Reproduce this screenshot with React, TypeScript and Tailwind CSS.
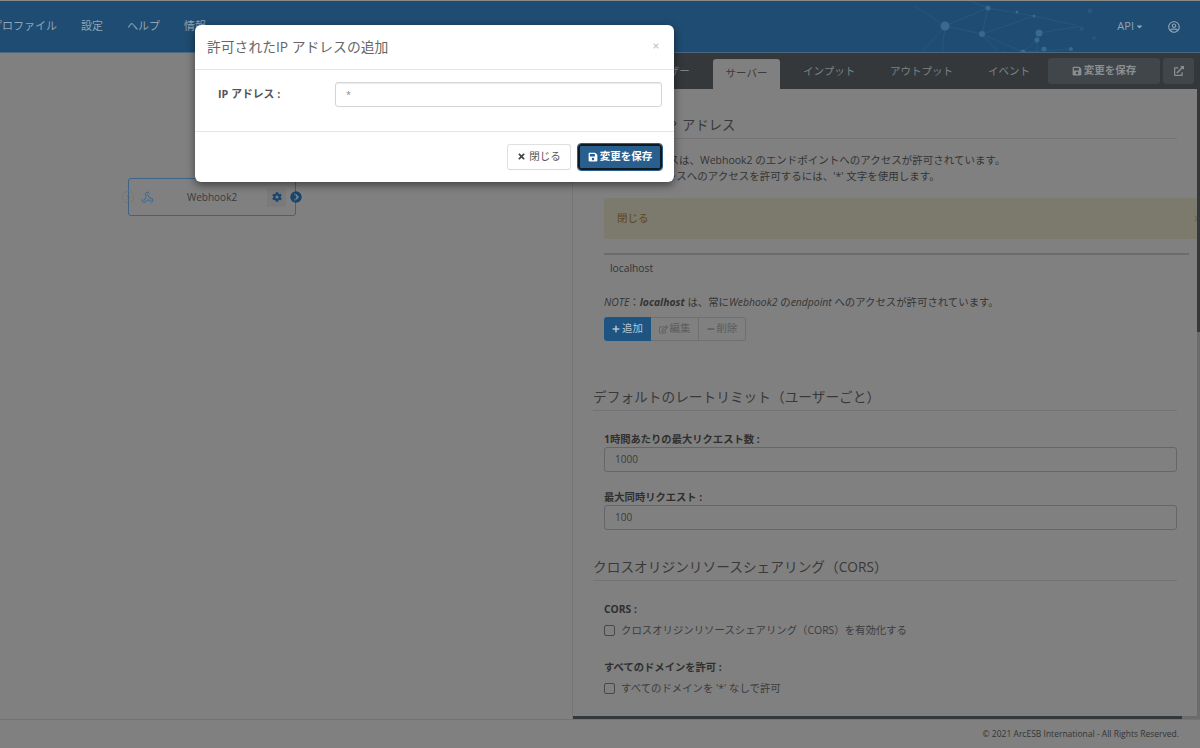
import { FaSave, FaTimes, FaPlus, FaMinus, FaRegEdit, FaExternalLinkAlt, FaRegUserCircle, FaCog, FaChevronCircleRight, FaCaretDown, FaChevronRight } from "react-icons/fa"
import { Webhook } from "lucide-react"

const font = "font-['Open_Sans','Noto_Sans_CJK_JP',sans-serif]"

const navItems = [
  { label: "プロファイル", className: "ml-[-9px]" },
  { label: "設定", className: "ml-[24px]" },
  { label: "ヘルプ", className: "ml-[24px]" },
  { label: "情報", className: "ml-[24px]" },
]

const nodes = [
  [945, 25, 4.5], [988, 7, 2.5], [982, 33, 3], [1017, 11, 1.5], [1034, 15, 1.5], [1039, 32, 3.5],
  [1037, 39, 2.5], [1023, 51, 2.5], [1071, 48, 2], [1044, 48, 2.5], [1082, 28, 2], [1090, 10, 2.5], [1094, 37, 2], [1005, 52, 2],
]

const links = [
  [945, 25, 988, 7], [945, 25, 982, 33], [988, 7, 1034, 15], [988, 7, 982, 33], [982, 33, 1034, 15],
  [982, 33, 1023, 51], [982, 33, 1000, 53], [1023, 51, 1037, 39], [1037, 39, 1039, 32], [1037, 39, 1037, 53],
  [1039, 32, 1082, 25], [1034, 15, 1075, 24], [945, 25, 920, 53], [945, 25, 942, 53], [945, 25, 915, 5], [988, 7, 970, 0],
  [1023, 51, 1071, 48],
]

function HeaderGraphic() {
  return (
    <svg className="absolute left-[900px] top-0 h-[52px] w-[220px]" viewBox="900 0 220 52">
      {links.map((l, i) => (
        <line key={i} x1={l[0]} y1={l[1]} x2={l[2]} y2={l[3]} stroke="#2a5c84" strokeWidth="0.7" />
      ))}
      {nodes.map((n, i) => (
        <circle key={i} cx={n[0]} cy={n[1]} r={n[2]} fill={i > 9 ? "#265780" : "#38698f"} />
      ))}
    </svg>
  )
}

function Header() {
  return (
    <header className="relative flex h-[53px] shrink-0 items-center overflow-hidden border-t border-b border-t-[#8a8a8a] border-b-[#4a6880] bg-[#1f4c72] text-[11px] text-[#93a4b4]">
      <HeaderGraphic />
      <nav className="relative flex items-center">
        {navItems.map((item) => (
          <span key={item.label} className={`whitespace-nowrap ${item.className}`}>{item.label}</span>
        ))}
      </nav>
      <div className="relative ml-auto flex items-center pr-[20px]">
        <span className="flex items-center gap-[1px] text-[11px]">API <FaCaretDown className="h-[9px] w-[9px]" /></span>
        <FaRegUserCircle className="ml-[24px] h-[12px] w-[12px]" />
      </div>
    </header>
  )
}

function Tabs() {
  return (
    <div className="flex h-[36px] shrink-0 items-end whitespace-nowrap bg-[#34383b] text-[10.5px] text-[#7d8286]">
      <span className="mb-[9px] ml-[76px] w-[42px]">ユーザー</span>
      <span className="ml-[23px] flex h-[30px] w-[67px] items-center justify-center rounded-t-[3px] bg-[#808080] text-[#3b3b3b]">サーバー</span>
      <span className="mb-[9px] ml-[23px] w-[52px]">インプット</span>
      <span className="mb-[9px] ml-[35px] w-[63px]">アウトプット</span>
      <span className="mb-[9px] ml-[35px] w-[42px]">イベント</span>
      <div className="mb-[5px] ml-[18px] flex h-[26px] w-[112px] items-center justify-center gap-[2px] rounded-[3px] bg-[#41464a] font-semibold text-[#8a8f93]">
        <FaSave className="h-[10px] w-[10px]" />変更を保存
      </div>
      <div className="mb-[5px] ml-[3px] flex h-[26px] w-[31px] items-center justify-center rounded-[3px] bg-[#41464a] text-[#8a8f93]">
        <FaExternalLinkAlt className="h-[10px] w-[10px]" />
      </div>
    </div>
  )
}

function SectionTitle({ children, className }: { children: React.ReactNode; className: string }) {
  return (
    <h3 className={`ml-[20px] w-[584px] border-b border-[#737373] text-[13.7px] leading-[22px] text-[#393939] ${className}`}>
      {children}
    </h3>
  )
}

function ReadInput({ label, value, className }: { label: string; value: string; className: string }) {
  return (
    <div className={`ml-[31px] w-[573px] ${className}`}>
      <div className="text-[10.3px] font-bold leading-[16px] text-[#2f2f2f]">{label}</div>
      <div className="flex h-[25px] items-center rounded-[3px] border border-[#666666] pl-[10px] text-[10px] text-[#3c3c3c]">{value}</div>
    </div>
  )
}

function CheckRow({ label, text, className }: { label: string; text: string; className: string }) {
  return (
    <div className={`ml-[31px] ${className}`}>
      <div className="text-[10.3px] font-bold leading-[16px] text-[#2f2f2f]">{label}</div>
      <div className="mt-[5px] flex items-center gap-[6px] text-[10.4px] leading-[16px] text-[#3c3c3c]">
        <span className="h-[11px] w-[11px] rounded-[2px] border border-[#484848]" />
        {text}
      </div>
    </div>
  )
}

function ServerPanel() {
  return (
    <div className="min-h-0 flex-1 overflow-hidden bg-[#808080] text-[#343434]">
      <SectionTitle className="mt-[25px] pb-[2px]">
        <span className="text-[13.3px] [word-spacing:2px]">許可された IP アドレス</span>
      </SectionTitle>
      <p className="ml-[31px] mt-[13px] text-[10.5px] leading-[16px]">
        次のIP アドレスは、Webhook2 のエンドポイントへのアクセスが許可されています。<br />
        全てのIPアドレスへのアクセスを許可するには、'*' 文字を使用します。
      </p>
      <div className="relative ml-[31px] mt-[14px] flex h-[41px] w-[600px] items-center rounded-[3px] bg-[#7c7a6c] pl-[13px] text-[10.5px] text-[#5b4424]">
        閉じる
        <FaTimes className="absolute left-[589px] h-[9px] w-[9px] text-[#6c6b5e]" />
      </div>
      <div className="ml-[31px] mt-[14px] w-[585px] border-t-2 border-[#6c6c6c] pl-[6px] pt-[4px] text-[10.3px] leading-[18px]">localhost</div>
      <p className="ml-[31px] mt-[17px] text-[10.4px] leading-[16px]">
        <i>NOTE</i>：<b><i>localhost</i></b> は、常に<i>Webhook2</i> の<i>endpoint</i> へのアクセスが許可されています。
      </p>
      <div className="ml-[31px] mt-[7px] flex h-[24px] text-[10.4px]">
        <span className="flex w-[47px] items-center justify-center gap-[2px] rounded-l-[3px] bg-[#1e5482] text-[#b6c4d0]"><FaPlus className="h-[8px] w-[8px]" />追加</span>
        <span className="flex w-[48px] items-center justify-center gap-[2px] border border-l-0 border-[#707070] text-[#5c5c5c]"><FaRegEdit className="h-[9px] w-[9px]" />編集</span>
        <span className="flex w-[47px] items-center justify-center gap-[2px] rounded-r-[3px] border border-l-0 border-[#707070] text-[#5c5c5c]"><FaMinus className="h-[8px] w-[8px]" />削除</span>
      </div>
      <SectionTitle className="mt-[45px] pb-[2px]">デフォルトのレートリミット（ユーザーごと）</SectionTitle>
      <ReadInput className="mt-[20px]" label="1時間あたりの最大リクエスト数 :" value="1000" />
      <ReadInput className="mt-[17px]" label="最大同時リクエスト :" value="100" />
      <SectionTitle className="mt-[26px] pb-[2px]">クロスオリジンリソースシェアリング（CORS）</SectionTitle>
      <CheckRow className="mt-[20px]" label="CORS :" text="クロスオリジンリソースシェアリング（CORS）を有効化する" />
      <CheckRow className="mt-[21px]" label="すべてのドメインを許可 :" text="すべてのドメインを '*' なしで許可" />
    </div>
  )
}

function WebhookNode() {
  return (
    <div className="absolute left-[128px] top-[125px] flex h-[38px] w-[168px] items-center rounded-[3px] border border-[#3d6488] text-[10px] text-[#3a3a3a]">
      <span className="absolute left-[-7px] flex h-[12px] w-[12px] items-center justify-center rounded-full border border-dotted border-[#6d6d6d]">
        <FaChevronRight className="h-[5px] w-[5px] text-[#5f5f5f]" />
      </span>
      <Webhook className="ml-[12px] h-[13px] w-[13px] text-[#2f6494]" strokeWidth={1.6} />
      <span className="ml-[33px]">Webhook2</span>
      <span className="absolute left-[138px] flex h-[19px] w-[19px] items-center justify-center bg-[#7a7a7a]">
        <FaCog className="h-[10px] w-[10px] text-[#17466f]" />
      </span>
      <FaChevronCircleRight className="absolute left-[161px] h-[12px] w-[12px] rounded-full text-[#17466f]" />
    </div>
  )
}

function AddIpDialog() {
  return (
    <div className="absolute left-[195px] top-[25px] w-[479px] rounded-[6px] bg-white shadow-[0_3px_9px_rgba(0,0,0,0.5)]">
      <div className="flex h-[45px] items-center justify-between border-b border-[#e5e5e5] pl-[12px] pr-[14px]">
        <h4 className="text-[13.8px] text-[#666666]">許可されたIP アドレスの追加</h4>
        <FaTimes className="mb-[3px] h-[8px] w-[8px] text-[#cfcfcf]" />
      </div>
      <div className="flex h-[62px] items-start border-b border-[#e5e5e5] pl-[23px] pr-[12px] pt-[12px]">
        <span className="mt-[4px] w-[117px] text-[10.8px] font-bold text-[#555555]">IP アドレス :</span>
        <div className="flex h-[25px] flex-1 items-center rounded-[3px] border border-[#d5d5d5] pl-[10px] text-[9px] text-[#888888] shadow-[inset_0_1px_1px_rgba(0,0,0,0.075)]">*</div>
      </div>
      <div className="flex h-[50px] items-center justify-end gap-[7px] pb-[1px] pr-[12px] text-[10.5px]">
        <button className="flex h-[26px] w-[64px] items-center justify-center gap-[3px] rounded-[3px] border border-[#e0e0e0] border-b-[#cfdbe6] text-[#555555]">
          <FaTimes className="h-[9px] w-[9px] text-[#444444]" />閉じる
        </button>
        <button className="flex h-[26px] w-[84px] items-center justify-center gap-[2px] rounded-[3px] border-2 border-[#14191d] bg-[#285f8f] font-semibold text-white outline outline-1 outline-[#285f8f]">
          <FaSave className="h-[10px] w-[10px]" />変更を保存
        </button>
      </div>
    </div>
  )
}

export default function App() {
  return (
    <div className={`relative flex h-[748px] w-[1200px] flex-col overflow-hidden bg-[#808080] ${font}`}>
      <Header />
      <div className="flex min-h-0 flex-1">
        <div className="relative w-[572px] shrink-0">
          <WebhookNode />
        </div>
        <div className="flex w-[628px] flex-col">
          <Tabs />
          <div className="flex min-h-0 flex-1 border-l border-[#757575]">
            <div className="flex min-w-0 flex-1 flex-col">
              <ServerPanel />
              <div className="flex h-[3px] shrink-0">
                <div className="w-[609px] bg-[#34383b]" />
                <div className="flex-1 bg-[#6c6c6c]" />
              </div>
            </div>
            <div className="flex w-[3px] shrink-0 flex-col bg-[#6c6c6c]">
              <div className="h-[243px] bg-[#34383b]" />
            </div>
          </div>
        </div>
      </div>
      <footer className="flex h-[29px] shrink-0 items-center justify-end border-t border-[#737373] pr-[21px] text-[8.5px] text-[#343434]">
        © 2021 ArcESB International - All Rights Reserved.
      </footer>
      <AddIpDialog />
    </div>
  )
}
